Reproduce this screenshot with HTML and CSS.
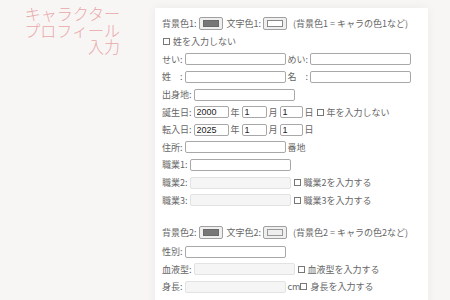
FILE: index.html
```html
<!DOCTYPE html>
<html lang="ja">
<head>
<meta charset="utf-8">
<link rel="stylesheet" href="styles.css">
</head>
<body>
<div class="page">
  <div class="side">
    <h1 class="title">キャラクター<br>プロフィール<br>入力</h1>
  </div>
  <div class="panel">
    <div class="row crow">
      <span class="lbl">背景色1:</span><span class="swatch"><span class="fill dark"></span></span>
      <span class="lbl">文字色1:</span><span class="swatch"><span class="fill white"></span></span>
      <span class="note">(背景色1 = キャラの色1など)</span>
    </div>
    <div class="row"><span class="cb"></span><span>姓を入力しない</span></div>
    <div class="row">
      <span class="lbl">せい:</span><input class="inp w100" type="text">
      <span class="lbl">めい:</span><input class="inp w100" type="text">
    </div>
    <div class="row">
      <span class="lbl">姓　:</span><input class="inp w100" type="text">
      <span class="lbl">名　:</span><input class="inp w100" type="text">
    </div>
    <div class="row"><span class="lbl">出身地:</span><input class="inp w100" type="text"></div>
    <div class="row">
      <span class="lbl">誕生日:</span><input class="inp wy" type="text" value="2000"><span class="u">年</span><input class="inp wm" type="text" value="1"><span class="u">月</span><input class="inp wd" type="text" value="1"><span class="u">日</span><span class="cb"></span><span>年を入力しない</span>
    </div>
    <div class="row">
      <span class="lbl">転入日:</span><input class="inp wy" type="text" value="2025"><span class="u">年</span><input class="inp wm" type="text" value="1"><span class="u">月</span><input class="inp wd" type="text" value="1"><span class="u">日</span>
    </div>
    <div class="row"><span class="lbl">住所:</span><input class="inp w100" type="text"><span class="u">番地</span></div>
    <div class="row"><span class="lbl">職業1:</span><input class="inp w100" type="text"></div>
    <div class="row"><span class="lbl">職業2:</span><input class="inp w100 dis" type="text" disabled><span class="cb"></span><span>職業2を入力する</span></div>
    <div class="row"><span class="lbl">職業3:</span><input class="inp w100 dis" type="text" disabled><span class="cb"></span><span>職業3を入力する</span></div>

    <div class="row crow sec">
      <span class="lbl">背景色2:</span><span class="swatch"><span class="fill dark"></span></span>
      <span class="lbl">文字色2:</span><span class="swatch"><span class="fill light"></span></span>
      <span class="note">(背景色2 = キャラの色2など)</span>
    </div>
    <div class="row"><span class="lbl">性別:</span><input class="inp w100" type="text"></div>
    <div class="row"><span class="lbl">血液型:</span><input class="inp w100 dis" type="text" disabled><span class="cb"></span><span>血液型を入力する</span></div>
    <div class="row"><span class="lbl">身長:</span><input class="inp w100 dis" type="text" disabled><span class="u2">cm</span><span class="cb tight"></span><span>身長を入力する</span></div>
  </div>
</div>
</body>
</html>
```
FILE: styles.css
```css
html, body {
  margin: 0;
  padding: 0;
  background: #f8f6f5;
  font-family: "Noto Sans CJK JP", "Noto Sans", sans-serif;
  color: #666;
  font-size: 9px;
  overflow: hidden;
}
.page {
  display: flex;
  align-items: flex-start;
}
.side {
  width: 155px;
  flex: none;
}
.title {
  margin: 0;
  padding: 5px 35px 0 0;
  text-align: right;
  font-weight: 300;
  font-size: 16px;
  line-height: 16.5px;
  color: #e8a8aa;
  letter-spacing: 0;
}
.panel {
  margin-top: 8px;
  width: 273px;
  min-height: 320px;
  box-sizing: border-box;
  background: #fff;
  padding: 5px 7px 0 7px;
  box-shadow: 0 0 10px rgba(0,0,0,0.05);
}
.row {
  display: flex;
  align-items: center;
  height: 17.6px;
  white-space: nowrap;
  line-height: 1;
}
.crow { height: 20px; }
.sec { margin-top: 14px; }
.lbl { margin-right: 2px; }
.inp {
  box-sizing: border-box;
  height: 12px;
  border: 1px solid #a8a8a8;
  border-radius: 2px;
  background: #fff;
  font-family: "Liberation Sans", sans-serif;
  font-size: 9px;
  color: #222;
  padding: 0 2px;
  margin: 0 2px 0 0;
  outline: none;
}
.inp.dis {
  background: #f5f5f5;
  border-color: #e2e2e2;
}
.w100 { width: 101px; }
.wy { width: 35px; }
.wm { width: 25px; }
.wd { width: 23px; }
.u { margin-right: 2px; }
.u2 { margin-right: 0; }
.swatch {
  box-sizing: border-box;
  width: 24px;
  height: 13px;
  border: 1px solid #a0a0a0;
  border-radius: 2px;
  background: #efefef;
  padding: 2px 3px;
  margin-right: 4px;
  display: flex;
}
.fill {
  flex: 1;
  border: 1px solid #777;
}
.fill.dark { background: #777; border-color: #6a6a6a; }
.fill.white { background: #fff; border-color: #888; }
.fill.light { background: #eee; border-color: #999; }
.note { margin-left: 2px; }
.cb {
  box-sizing: border-box;
  width: 7px;
  height: 7px;
  border: 1px solid #777;
  margin: 0 3px 0 1px;
}
.cb.tight { margin-left: 0; }
```
